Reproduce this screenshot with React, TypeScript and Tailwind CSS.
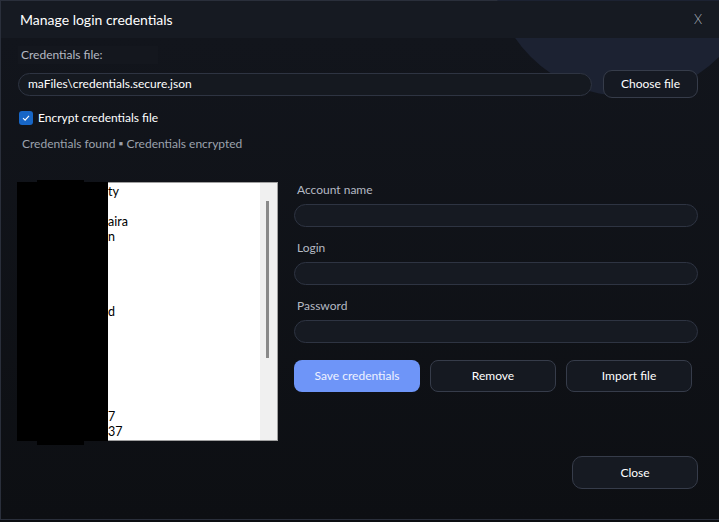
import React from "react";

const font = { fontFamily: 'Lato, "Noto Sans", Arial, sans-serif' };

function Field({ label }: { label: string }) {
  return (
    <div className="flex flex-col">
      <div className="h-[18px] pl-[3px] text-[12px] leading-[18px] text-[#b4b9c3]">{label}</div>
      <div className="mt-[5px] h-[23px] rounded-full border border-[#2e3442] bg-[#161a22]" />
    </div>
  );
}

export default function App() {
  const lines = ["ty", "", "aira", "n", "", "", "", "", "d", "", "", "", "", "", "", "7", "37"];
  return (
    <div className="relative h-[522px] w-[719px] overflow-hidden bg-[#0c0e12]" style={font}>
      <div className="flex h-[520px] flex-col border-b border-l border-t border-[#2a2f3b] bg-[#12151b]">
        {/* title bar */}
        <div className="relative z-10 flex h-[37px] shrink-0 items-center justify-between bg-[#161a22] pl-[19px] pr-[17px]">
          <span className="text-[14px] text-white">Manage login credentials</span>
          <span className="text-[13px] font-light text-[#aab0bd]">X</span>
        </div>
        {/* body */}
        <div className="relative flex flex-1 flex-col bg-gradient-to-b from-[#12151c] to-[#0d0f13] pl-[17px] pr-[21px]">
          <div className="pointer-events-none absolute left-[491px] top-[-208px] h-[266px] w-[266px] rounded-full bg-[#1c2232]" />
          <div className="relative mt-[8px] h-[18px] w-[140px] bg-[#14171e] pl-[3px] text-[12px] leading-[18px] text-[#b4b9c3]">
            Credentials file:
          </div>
          <div className="relative mt-[6px] flex h-[28px] items-center gap-[11px]">
            <div className="flex h-[23px] flex-1 items-center rounded-full border border-[#2e3442] bg-[#151920] pl-[9px] text-[12px] text-white">
              maFiles\credentials.secure.json
            </div>
            <button className="h-[28px] w-[95px] rounded-[9px] border border-[#363c4a] bg-[#151922] text-[12px] text-white">
              Choose file
            </button>
          </div>
          <div className="mt-[11px] flex h-[18px] items-center gap-[5px] pl-[1px]">
            <div className="flex h-[14px] w-[14px] items-center justify-center rounded-[3px] bg-[#1766c6]">
              <svg width="10" height="10" viewBox="0 0 10 10">
                <path d="M2 5.2 L4.1 7.2 L8 2.8" fill="none" stroke="white" strokeWidth="1.1" />
              </svg>
            </div>
            <span className="text-[12px] leading-[18px] text-white">Encrypt credentials file</span>
          </div>
          <div className="mt-[8px] h-[18px] pl-[4px] text-[12px] leading-[18px] text-[#9ca2ad]">
            Credentials found ▪ Credentials encrypted
          </div>
          <div className="-ml-[1px] mt-[29px] flex gap-[16px]">
            {/* list box */}
            <div className="relative flex h-[259px] w-[261px] border border-[#a0a0a0] bg-white">
              <div className="flex-1 pl-[90px] pt-[1px] text-[12.5px] text-black">
                {lines.map((l, i) => (
                  <div key={i} className="h-[15px] overflow-hidden leading-[15px]">{l}</div>
                ))}
              </div>
              <div className="relative w-[17px] bg-[#f0f0f0]">
                <div className="absolute left-[6px] top-[18px] h-[157px] w-[3px] bg-[#8a8a8a]" />
              </div>
              <div className="absolute left-[-1px] top-[-1px] h-[259px] w-[91px] bg-black" />
              <div className="absolute left-[19px] top-[-3px] h-[265px] w-[47px] bg-black" />
            </div>
            {/* right column */}
            <div className="-mt-[1px] flex flex-1 flex-col">
              <div className="flex flex-col gap-[12px]">
                <Field label="Account name" />
                <Field label="Login" />
                <Field label="Password" />
              </div>
              <div className="mt-[17px] flex gap-[10px]">
                <button className="h-[32px] w-[126px] rounded-[8px] bg-[#6e95f8] text-[12px] text-[#eef2ff]">
                  Save credentials
                </button>
                <button className="h-[32px] w-[126px] rounded-[8px] border border-[#363c4a] bg-[#151921] text-[12px] text-white">
                  Remove
                </button>
                <button className="h-[32px] w-[126px] rounded-[8px] border border-[#363c4a] bg-[#151921] text-[12px] text-white">
                  Import file
                </button>
              </div>
            </div>
          </div>
          <div className="mt-[15px] flex justify-end">
            <button className="h-[33px] w-[126px] rounded-[10px] border border-[#363c4a] bg-[#161a22] text-[12px] text-white">
              Close
            </button>
          </div>
        </div>
      </div>
    </div>
  );
}
